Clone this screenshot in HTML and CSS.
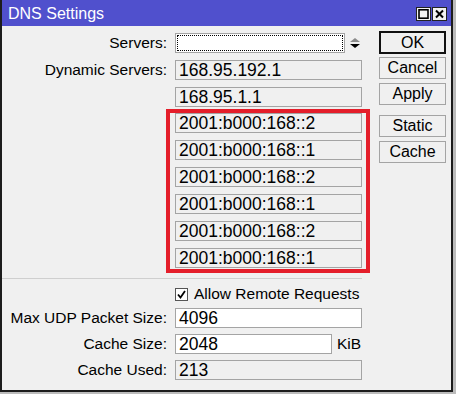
FILE: index.html
```html
<!DOCTYPE html>
<html lang="en">
<head>
    <meta charset="UTF-8">
    <title>DNS Settings</title>
    <link rel="stylesheet" href="styles.css">
</head>
<body>
    <div class="window">
        <div class="titlebar">
            <span class="title">DNS Settings</span>
            <div class="title-btns">
                <span class="tbtn">
                    <svg width="13" height="12" viewBox="0 0 13 12"><rect x="2" y="1.8" width="9" height="8.4" fill="none" stroke="#000" stroke-width="1.6"/></svg>
                </span>
                <span class="tbtn">
                    <svg width="13" height="12" viewBox="0 0 13 12"><path d="M3 2.5 L10 9.5 M10 2.5 L3 9.5" stroke="#000" stroke-width="2"/></svg>
                </span>
            </div>
        </div>

        <div class="content">
            <div class="form">
                <div class="row">
                    <label>Servers:</label>
                    <div class="field editable focus"><span class="focus-ring"></span></div>
                    <svg class="spinner" width="12" height="12" viewBox="0 0 12 12">
                        <path d="M1 5 L6 1 L11 5 Z" fill="#8a8a8a"/>
                        <path d="M1 7 L11 7 L6 11 Z" fill="#000"/>
                    </svg>
                </div>
                <div class="row">
                    <label>Dynamic Servers:</label>
                    <div class="field">168.95.192.1</div>
                </div>
                <div class="row tight">
                    <label></label>
                    <div class="field">168.95.1.1</div>
                </div>
                <div class="row group">
                    <label></label>
                    <div class="field-stack">
                        <div class="field">2001:b000:168::2</div>
                        <div class="field">2001:b000:168::1</div>
                        <div class="field">2001:b000:168::2</div>
                        <div class="field">2001:b000:168::1</div>
                        <div class="field">2001:b000:168::2</div>
                        <div class="field">2001:b000:168::1</div>
                        <div class="highlight"></div>
                    </div>
                </div>

                <div class="separator"></div>

                <div class="check-row">
                    <span class="checkbox">
                        <svg width="11" height="11" viewBox="0 0 11 11"><path d="M2 5.5 L4.5 8.5 L9 2" fill="none" stroke="#000" stroke-width="1.8"/></svg>
                    </span>
                    <span>Allow Remote Requests</span>
                </div>

                <div class="row after-check">
                    <label>Max UDP Packet Size:</label>
                    <div class="field editable">4096</div>
                </div>
                <div class="row tight">
                    <label>Cache Size:</label>
                    <div class="field editable short">2048</div>
                    <span class="unit">KiB</span>
                </div>
                <div class="row">
                    <label>Cache Used:</label>
                    <div class="field">213</div>
                </div>
            </div>

            <div class="buttons">
                <button class="default">OK</button>
                <button>Cancel</button>
                <button>Apply</button>
                <button class="spaced">Static</button>
                <button>Cache</button>
            </div>
        </div>
    </div>
</body>
</html>
```

FILE: styles.css
```css
html {
    background: #bcbcbc;
}
body {
    margin: 0;
    font-family: "Liberation Sans", Arial, sans-serif;
    color: #000;
}
.window {
    width: 453px;
    height: 392px;
    box-sizing: border-box;
    border: 2px solid #1c1c1c;
    border-top-width: 0;
    background: #f0f0f0;
}
.titlebar {
    height: 26px;
    background: #5050cd;
    display: flex;
    align-items: center;
    justify-content: space-between;
    padding: 0 4px 0 6px;
}
.title {
    color: #fff;
    font-size: 16px;
    padding-top: 1px;
}
.title-btns {
    display: flex;
    gap: 1px;
    margin-top: 1px;
}
.tbtn {
    width: 13px;
    height: 12px;
    border: 1px solid #222;
    background: #f2f2f2;
    display: flex;
}
.content {
    display: flex;
    padding-top: 5px;
}
.form {
    width: 360px;
    margin-top: 2px;
}
.row {
    display: flex;
    align-items: center;
    margin-bottom: 7px;
}
.row.tight {
    margin-bottom: 6px;
}
.row.group {
    align-items: flex-start;
}
.row label {
    width: 165px;
    flex: none;
    text-align: right;
    font-size: 15.5px;
    margin-right: 8px;
}
.field {
    position: relative;
    width: 187px;
    height: 20px;
    box-sizing: border-box;
    border: 1px solid #a4a4a4;
    background: #f0f0f0;
    font-size: 17.5px;
    line-height: 18px;
    padding-left: 3px;
    white-space: nowrap;
    overflow: hidden;
}
.field.editable {
    background: #fff;
}
.field.focus {
    width: 170px;
}
.field.short {
    width: 157px;
}
.focus-ring {
    position: absolute;
    inset: 1px;
    border: 1px dotted #000;
}
.spinner {
    margin-left: 4px;
}
.unit {
    font-size: 15.5px;
    margin-left: 5px;
}
.field-stack {
    position: relative;
    display: flex;
    flex-direction: column;
    gap: 7px;
}
.highlight {
    position: absolute;
    top: -4px;
    left: -9px;
    right: -8px;
    bottom: -5px;
    border: 4px solid #e41e2a;
}
.separator {
    height: 1px;
    background: #cfcfcf;
    margin: 10px 0 0 0;
}
.check-row {
    display: flex;
    align-items: center;
    padding-left: 173px;
    margin-top: 7px;
    font-size: 15.5px;
    height: 16px;
}
.checkbox {
    width: 11px;
    height: 11px;
    border: 1px solid #555;
    background: #fff;
    margin-right: 6px;
    display: flex;
}
.row.after-check {
    margin-top: 6px;
    margin-bottom: 6px;
}
.buttons {
    display: flex;
    flex-direction: column;
    gap: 4px;
    margin-left: 17px;
}
button {
    width: 67px;
    height: 22px;
    box-sizing: border-box;
    border: 1px solid #a4a4a4;
    background: #f0f0f0;
    font-family: "Liberation Sans", Arial, sans-serif;
    font-size: 16px;
    padding: 0;
    color: #000;
}
button.default {
    border: 2px solid #111;
    height: 23px;
    margin-bottom: -1px;
}
button.spaced {
    margin-top: 6px;
}
```
